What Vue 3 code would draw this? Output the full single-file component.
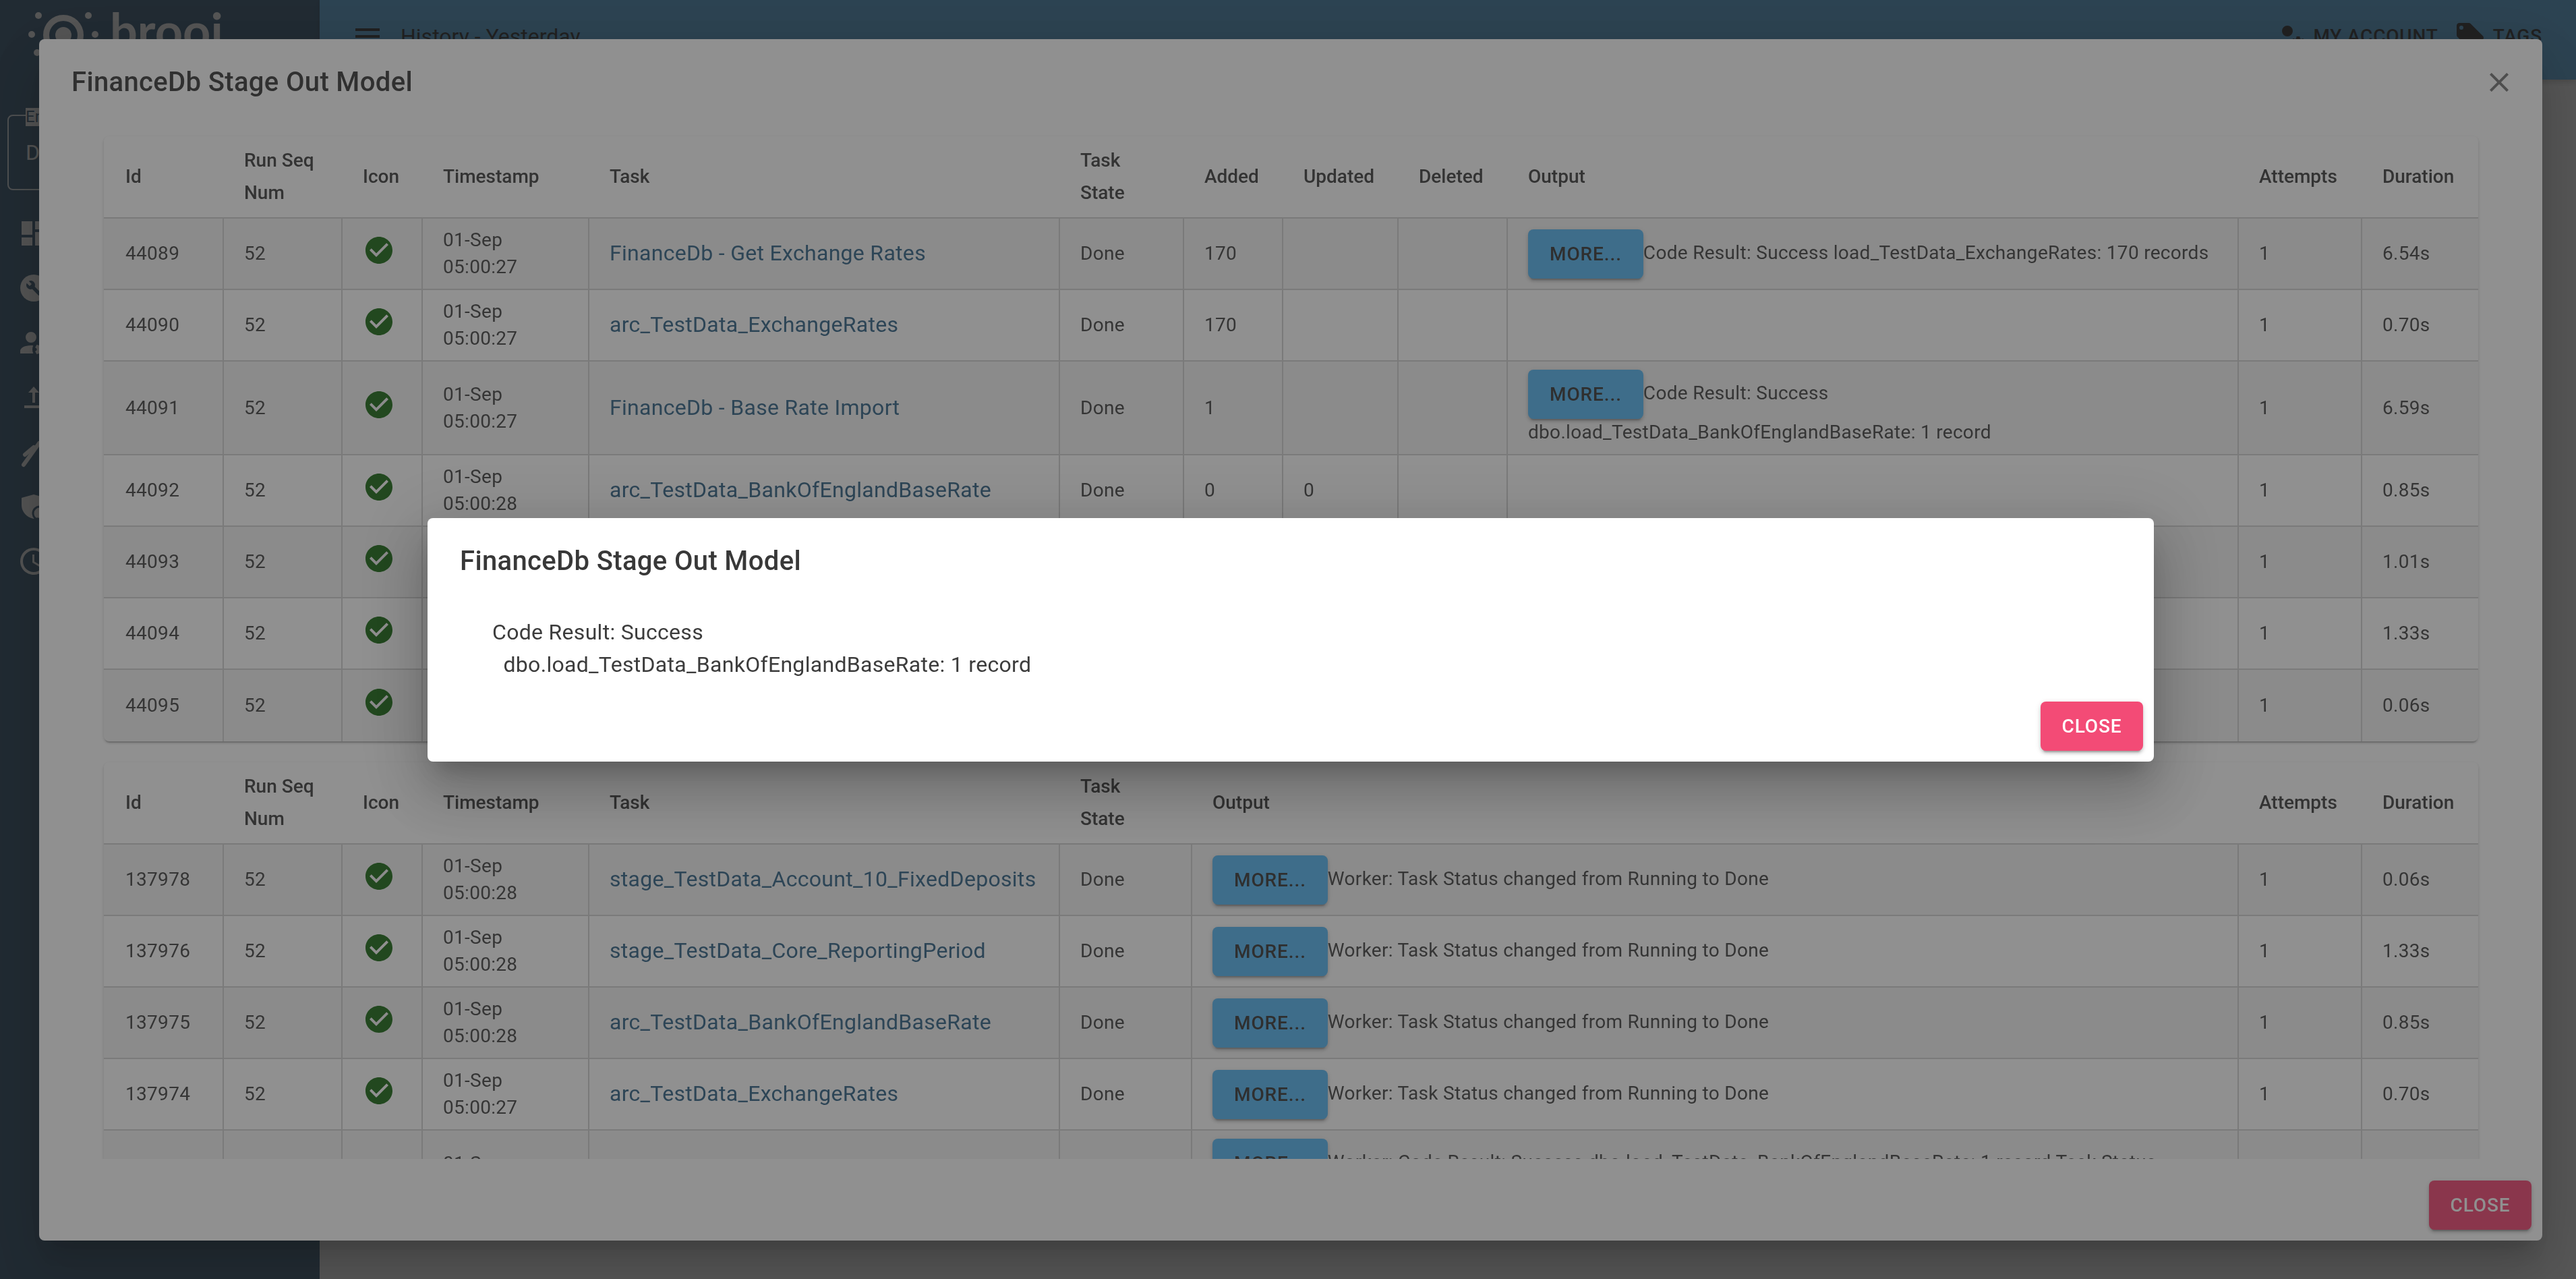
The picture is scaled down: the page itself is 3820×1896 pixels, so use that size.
<template>
  <div class="page">
    <aside class="sidebar">
      <div class="logo">
        <svg class="logo-mark" width="110" height="80" viewBox="40 10 110 80" fill="#f0f0f0">
          <circle cx="57" cy="23" r="5" />
          <circle cx="131" cy="23" r="5" />
          <circle cx="47" cy="51" r="5" />
          <circle cx="141" cy="51" r="5" />
          <circle cx="55" cy="78" r="5" />
          <circle cx="133" cy="78" r="5" />
          <circle cx="94" cy="52" r="12" />
          <circle cx="94" cy="52" r="25.5" fill="none" stroke="#f0f0f0" stroke-width="9" />
        </svg>
        <span class="logo-text">brooi</span>
      </div>
      <div class="env-field">
        <span class="env-label">Env</span>
        <span class="env-value">Dev</span>
      </div>
      <nav class="side-nav">
        <div class="side-item">
          <svg width="48" height="48" viewBox="0 0 24 24" fill="currentColor"><path d="M13,3V9H21V3M13,21H21V11H13M3,21H11V15H3M3,13H11V3H3V13Z" /></svg>
        </div>
        <div class="side-item">
          <svg width="48" height="48" viewBox="0 0 24 24" fill="currentColor">
            <circle cx="12" cy="12" r="10" />
            <path transform="translate(6 6) scale(0.5)" fill="#214969" d="M22.7,19L13.6,9.9C14.5,7.6 14,4.9 12.1,3C10.1,1 7.1,0.6 4.7,1.7L9,6L6,9L1.6,4.7C0.4,7.1 0.9,10.1 2.9,12.1C4.8,14 7.5,14.5 9.8,13.6L18.9,22.7C19.3,23.1 19.9,23.1 20.3,22.7L22.6,20.4C23.1,20 23.1,19.3 22.7,19Z" />
          </svg>
        </div>
        <div class="side-item">
          <svg width="48" height="48" viewBox="0 0 24 24" fill="currentColor"><path d="M10 4A4 4 0 0 0 6 8A4 4 0 0 0 10 12A4 4 0 0 0 14 8A4 4 0 0 0 10 4M17 12C16.87 12 16.76 12.09 16.74 12.21L16.55 13.53C16.25 13.66 15.96 13.82 15.7 14L14.46 13.5C14.35 13.5 14.22 13.5 14.15 13.63L13.15 15.36C13.09 15.47 13.11 15.6 13.21 15.68L14.27 16.5C14.25 16.67 14.24 16.83 14.24 17C14.24 17.17 14.25 17.33 14.27 17.5L13.21 18.32C13.12 18.4 13.09 18.53 13.15 18.64L14.15 20.37C14.21 20.5 14.34 20.5 14.46 20.5L15.7 20C15.96 20.18 16.24 20.35 16.55 20.47L16.74 21.79C16.76 21.91 16.86 22 17 22H19C19.11 22 19.22 21.91 19.24 21.79L19.43 20.47C19.73 20.34 20 20.18 20.27 20L21.5 20.5C21.63 20.5 21.76 20.5 21.83 20.37L22.83 18.64C22.89 18.53 22.86 18.4 22.77 18.32L21.7 17.5C21.72 17.33 21.74 17.17 21.74 17C21.74 16.83 21.73 16.67 21.7 16.5L22.76 15.68C22.85 15.6 22.88 15.47 22.82 15.36L21.82 13.63C21.76 13.5 21.63 13.5 21.5 13.5L20.27 14C20 13.82 19.73 13.65 19.42 13.53L19.23 12.21C19.22 12.09 19.11 12 19 12H17M10 14C5.58 14 2 15.79 2 18V20H11.68A7 7 0 0 1 11 17A7 7 0 0 1 11.64 14.09C11.11 14.03 10.56 14 10 14M18 15.5C18.83 15.5 19.5 16.17 19.5 17C19.5 17.83 18.83 18.5 18 18.5C17.16 18.5 16.5 17.83 16.5 17C16.5 16.17 17.17 15.5 18 15.5Z" /></svg>
        </div>
        <div class="side-item">
          <svg width="48" height="48" viewBox="0 0 24 24" fill="currentColor"><path d="M12 4l-4 4.500h3V16h2V8.500h3zM5 20v-2h14v2z" /></svg>
        </div>
        <div class="side-item">
          <svg width="48" height="48" viewBox="0 0 24 24" fill="none" stroke="currentColor" stroke-linecap="round">
            <path d="M4.500 21.500L16 5.500" stroke-width="3" />
            <path d="M5.500 14L12 8.500" stroke-width="3" />
          </svg>
        </div>
        <div class="side-item">
          <svg width="48" height="48" viewBox="0 0 24 24" fill="currentColor">
            <path d="M12 3L3 5.500V11C3 15.500 6.500 20 12 21C17.500 20 21 15.500 21 11V5.500Z" />
            <circle cx="16.500" cy="17" r="5" fill="none" stroke="#214969" stroke-width="1.500" />
            <circle cx="16.500" cy="17" r="3.500" />
          </svg>
        </div>
        <div class="side-item">
          <svg width="48" height="48" viewBox="0 0 24 24" fill="currentColor"><path d="M12,20A8,8 0 0,0 20,12A8,8 0 0,0 12,4A8,8 0 0,0 4,12A8,8 0 0,0 12,20M12,2A10,10 0 0,1 22,12A10,10 0 0,1 12,22C6.47,22 2,17.5 2,12A10,10 0 0,1 12,2M12.5,7V12.25L17,14.92L16.25,16.15L11,13V7H12.5Z" /></svg>
        </div>
      </nav>
    </aside>

    <div class="main">
      <header class="topbar">
        <svg width="48" height="48" viewBox="0 0 24 24" fill="currentColor"><path d="M3,6H21V8H3V6M3,11H21V13H3V11M3,16H21V18H3V16Z" /></svg>
        <span class="topbar-title">History - Yesterday</span>
        <div class="topbar-actions">
          <svg width="48" height="48" viewBox="0 0 24 24" fill="currentColor"><path d="M10 4A4 4 0 0 0 6 8A4 4 0 0 0 10 12A4 4 0 0 0 14 8A4 4 0 0 0 10 4M17 12C16.87 12 16.76 12.09 16.74 12.21L16.55 13.53C16.25 13.66 15.96 13.82 15.7 14L14.46 13.5C14.35 13.5 14.22 13.5 14.15 13.63L13.15 15.36C13.09 15.47 13.11 15.6 13.21 15.68L14.27 16.5C14.25 16.67 14.24 16.83 14.24 17C14.24 17.17 14.25 17.33 14.27 17.5L13.21 18.32C13.12 18.4 13.09 18.53 13.15 18.64L14.15 20.37C14.21 20.5 14.34 20.5 14.46 20.5L15.7 20C15.96 20.18 16.24 20.35 16.55 20.47L16.74 21.79C16.76 21.91 16.86 22 17 22H19C19.11 22 19.22 21.91 19.24 21.79L19.43 20.47C19.73 20.34 20 20.18 20.27 20L21.5 20.5C21.63 20.5 21.76 20.5 21.83 20.37L22.83 18.64C22.89 18.53 22.86 18.4 22.77 18.32L21.7 17.5C21.72 17.33 21.74 17.17 21.74 17C21.74 16.83 21.73 16.67 21.7 16.5L22.76 15.68C22.85 15.6 22.88 15.47 22.82 15.36L21.82 13.63C21.76 13.5 21.63 13.5 21.5 13.5L20.27 14C20 13.82 19.73 13.65 19.42 13.53L19.23 12.21C19.22 12.09 19.11 12 19 12H17M10 14C5.58 14 2 15.79 2 18V20H11.68A7 7 0 0 1 11 17A7 7 0 0 1 11.64 14.09C11.11 14.03 10.56 14 10 14M18 15.5C18.83 15.5 19.5 16.17 19.5 17C19.5 17.83 18.83 18.5 18 18.5C17.16 18.5 16.5 17.83 16.5 17C16.5 16.17 17.17 15.5 18 15.5Z" /></svg>
          <span class="topbar-link account">MY ACCOUNT</span>
          <svg width="48" height="48" viewBox="0 0 24 24" fill="currentColor"><path d="M5.5,7A1.5,1.5 0 0,1 4,5.5A1.5,1.5 0 0,1 5.5,4A1.5,1.5 0 0,1 7,5.5A1.5,1.5 0 0,1 5.5,7M21.41,11.58L12.41,2.58C12.05,2.22 11.55,2 11,2H4C2.89,2 2,2.89 2,4V11C2,11.55 2.22,12.05 2.59,12.41L11.58,21.41C11.95,21.77 12.45,22 13,22C13.55,22 14.05,21.77 14.41,21.41L21.41,14.41C21.78,14.05 22,13.55 22,13C22,12.44 21.77,11.94 21.41,11.58Z" /></svg>
          <span class="topbar-link">TAGS</span>
        </div>
      </header>
    </div>

    <!-- history dialog -->
    <div class="backdrop backdrop-history">
      <div class="history-modal">
        <div class="history-head">
          <h2>FinanceDb Stage Out Model</h2>
          <svg class="close-x" width="48" height="48" viewBox="0 0 24 24" fill="currentColor"><path d="M19,6.41L17.59,5L12,10.59L6.41,5L5,6.41L10.59,12L5,17.59L6.41,19L12,13.41L17.59,19L19,17.59L13.41,12L19,6.41Z" /></svg>
        </div>
        <div class="history-body">
          <div v-for="table in tables" :key="table.id" class="log-card">
            <table class="log-table">
              <colgroup>
                <col v-for="col in table.cols" :key="col.key" :style="{ width: col.width + 'px' }">
              </colgroup>
              <thead>
                <tr>
                  <th v-for="col in table.cols" :key="col.key" :class="{ stacked: col.key === 'state' }">{{ col.label }}</th>
                </tr>
              </thead>
              <tbody>
                <tr v-for="row in table.rows" :key="row.id">
                  <td v-for="col in table.cols" :key="col.key">
                    <svg v-if="col.key === 'icon'" class="ok-icon" width="48" height="48" viewBox="0 0 24 24" fill="currentColor"><path d="M12 2C17.5 2 22 6.5 22 12S17.500 22 12 22 2 17.500 2 12 6.500 2 12 2M10 17L19 8L17.600 6.600L10 14.200L6.400 10.600L5 12L10 17Z" fill-rule="evenodd" /></svg>
                    <a v-else-if="col.key === 'task'" class="task-link">{{ row.task }}</a>
                    <template v-else-if="col.key === 'output'">
                      <button v-if="row.output" class="more-btn">MORE...</button><span>{{ row.output }}</span>
                      <template v-if="row.output2"><br>{{ row.output2 }}</template>
                    </template>
                    <template v-else>{{ row[col.key] }}</template>
                  </td>
                </tr>
              </tbody>
            </table>
          </div>
        </div>
        <div class="history-foot">
          <button class="close-btn">CLOSE</button>
        </div>
      </div>
    </div>

    <!-- output detail dialog -->
    <div class="backdrop backdrop-detail">
      <div class="detail-modal">
        <h2>FinanceDb Stage Out Model</h2>
        <div class="detail-text">{{ detailText }}</div>
        <div class="detail-foot">
          <button class="close-btn">CLOSE</button>
        </div>
      </div>
    </div>
  </div>
</template>

<script setup>
const base = [
  { key: 'id', label: 'Id', width: 176 },
  { key: 'seq', label: 'Run Seq Num', width: 176 },
  { key: 'icon', label: 'Icon', width: 119 },
  { key: 'time', label: 'Timestamp', width: 247 },
  { key: 'task', label: 'Task', width: 698 }
]
const tail = [
  { key: 'attempts', label: 'Attempts', width: 183 },
  { key: 'duration', label: 'Duration', width: 174 }
]
const worker = 'Worker: Task Status changed from Running to Done'
const detailText = 'Code Result: Success\n  dbo.load_TestData_BankOfEnglandBaseRate: 1 record'

const tables = [
  {
    id: 'tasks',
    cols: [
      ...base,
      { key: 'state', label: 'Task State', width: 184 },
      { key: 'added', label: 'Added', width: 147 },
      { key: 'updated', label: 'Updated', width: 171 },
      { key: 'deleted', label: 'Deleted', width: 162 },
      { key: 'output', label: 'Output', width: 1084 },
      ...tail
    ],
    rows: [
      { id: 44089, seq: 52, time: '01-Sep 05:00:27', task: 'FinanceDb - Get Exchange Rates', state: 'Done', added: 170, output: 'Code Result: Success load_TestData_ExchangeRates: 170 records', attempts: 1, duration: '6.54s' },
      { id: 44090, seq: 52, time: '01-Sep 05:00:27', task: 'arc_TestData_ExchangeRates', state: 'Done', added: 170, attempts: 1, duration: '0.70s' },
      { id: 44091, seq: 52, time: '01-Sep 05:00:27', task: 'FinanceDb - Base Rate Import', state: 'Done', added: 1, output: 'Code Result: Success', output2: 'dbo.load_TestData_BankOfEnglandBaseRate: 1 record', attempts: 1, duration: '6.59s' },
      { id: 44092, seq: 52, time: '01-Sep 05:00:28', task: 'arc_TestData_BankOfEnglandBaseRate', state: 'Done', added: 0, updated: 0, attempts: 1, duration: '0.85s' },
      { id: 44093, seq: 52, time: '01-Sep 05:00:28', task: 'FinanceDb - Stage Out', state: 'Done', attempts: 1, duration: '1.01s' },
      { id: 44094, seq: 52, time: '01-Sep 05:00:28', task: 'stage_TestData_Core_ReportingPeriod', state: 'Done', attempts: 1, duration: '1.33s' },
      { id: 44095, seq: 52, time: '01-Sep 05:00:28', task: 'stage_TestData_Account_10_FixedDeposits', state: 'Done', attempts: 1, duration: '0.06s' }
    ]
  },
  {
    id: 'messages',
    cols: [
      ...base,
      { key: 'state', label: 'Task State', width: 196 },
      { key: 'output', label: 'Output', width: 1552 },
      ...tail
    ],
    rows: [
      { id: 137978, seq: 52, time: '01-Sep 05:00:28', task: 'stage_TestData_Account_10_FixedDeposits', state: 'Done', output: worker, attempts: 1, duration: '0.06s' },
      { id: 137976, seq: 52, time: '01-Sep 05:00:28', task: 'stage_TestData_Core_ReportingPeriod', state: 'Done', output: worker, attempts: 1, duration: '1.33s' },
      { id: 137975, seq: 52, time: '01-Sep 05:00:28', task: 'arc_TestData_BankOfEnglandBaseRate', state: 'Done', output: worker, attempts: 1, duration: '0.85s' },
      { id: 137974, seq: 52, time: '01-Sep 05:00:27', task: 'arc_TestData_ExchangeRates', state: 'Done', output: worker, attempts: 1, duration: '0.70s' },
      { id: 137973, seq: 52, time: '01-Sep 05:00:27', task: 'FinanceDb - Base Rate Import', state: 'Done', output: 'Worker: Code Result: Success dbo.load_TestData_BankOfEnglandBaseRate: 1 record Task Status changed from Running to Done', attempts: 1, duration: '6.59s' }
    ]
  }
]
</script>

<style>
html, body {
  margin: 0;
  height: 100%;
  overflow: hidden;
}
</style>

<style scoped>
.page {
  display: flex;
  height: 100vh;
  background: #fafafa;
  font-family: Roboto, "Liberation Sans", sans-serif;
  overflow: hidden;
}

.sidebar {
  width: 474px;
  flex: none;
  background: #214969;
  color: #f0f0f0;
}

.logo {
  display: flex;
  height: 158px;
  padding: 10px 0 0 40px;
  box-sizing: border-box;
  gap: 13px;
}

.logo-mark {
  flex: none;
}

.logo-text {
  font-family: Lato, sans-serif;
  font-size: 72px;
  font-weight: 700;
  line-height: 80px;
  margin-top: -6px;
}

.env-field {
  position: relative;
  height: 112px;
  margin: 12px 11px 23px;
  border: 2px solid #d8e0e4;
  border-radius: 8px;
  box-sizing: border-box;
  display: flex;
  align-items: center;
  padding-left: 25px;
  font-size: 32px;
}

.env-label {
  position: absolute;
  top: -12px;
  left: 25px;
  padding: 0 4px 0 0;
  background: #f0f0f0;
  color: #214969;
  font-size: 24px;
  line-height: 27px;
}

.side-item {
  height: 81px;
  display: flex;
  align-items: center;
  padding-left: 26px;
}

.main {
  flex: 1;
}

.topbar {
  height: 118px;
  box-sizing: border-box;
  display: flex;
  align-items: flex-start;
  padding: 30px 50px 0 47px;
  background: #4faae6;
  color: #212121;
  box-shadow: 0 4px 8px rgba(0, 0, 0, 0.2);
}

.topbar-title {
  margin-left: 25px;
  font-size: 32px;
  line-height: 48px;
}

.topbar-actions {
  margin-left: auto;
  display: flex;
  gap: 10px;
}

.topbar-link {
  font-size: 28px;
  font-weight: 500;
  letter-spacing: 0.8px;
  line-height: 48px;
}

.account {
  margin-right: 13px;
}

.backdrop {
  position: fixed;
  inset: 0;
  background: rgba(33, 33, 33, 0.5);
  display: flex;
}

.backdrop-history {
  padding: 58px 50px 57px 58px;
}

.backdrop-detail {
  padding-left: 8px;
  justify-content: center;
  align-items: center;
}

.history-modal {
  flex: 1;
  display: flex;
  flex-direction: column;
  min-width: 0;
  background: #fff;
  border-radius: 8px;
  box-shadow: 0 22px 30px -14px rgba(0, 0, 0, 0.2), 0 48px 76px 6px rgba(0, 0, 0, 0.14), 0 18px 92px 16px rgba(0, 0, 0, 0.12);
}

.history-head {
  display: flex;
  justify-content: space-between;
  align-items: center;
  height: 128px;
  box-sizing: border-box;
  padding: 32px 40px 32px 48px;
  flex: none;
}

h2 {
  margin: 0;
  font-size: 40px;
  font-weight: 500;
  line-height: 64px;
  letter-spacing: 0.35px;
}

.history-head h2 {
  color: #3f3f3f;
}

.close-x {
  color: #7a7a7a;
}

.history-body {
  flex: 1;
  min-height: 0;
  overflow: hidden;
  padding: 16px 95px 0 96px;
}

.log-card {
  background: #fff;
  border-radius: 8px;
  overflow: hidden;
  margin-bottom: 31px;
  box-shadow: 0 4px 2px -2px rgba(0, 0, 0, 0.2), 0 2px 4px 0 rgba(0, 0, 0, 0.1), 0 2px 6px 0 rgba(0, 0, 0, 0.08);
}

.log-table {
  width: 100%;
  table-layout: fixed;
  border-collapse: separate;
  border-spacing: 0;
  font-size: 28px;
  line-height: 40px;
  color: #484848;
}

.log-table th {
  height: 122px;
  box-sizing: border-box;
  padding: 12px 32px;
  border-bottom: 2px solid #d2d2d2;
  text-align: left;
  font-weight: 500;
  line-height: 48px;
  color: #454545;
}

.log-table th.stacked {
  padding-right: 60px;
}

.log-table td {
  height: 106px;
  box-sizing: border-box;
  padding: 12px 32px 12px 30px;
  border-left: 2px solid #d2d2d2;
  border-bottom: 2px solid #d2d2d2;
  vertical-align: middle;
  letter-spacing: 0.3px;
}

.log-table td:first-child {
  padding-left: 32px;
  border-left: none;
}

.log-table tbody tr:last-child td {
  border-bottom: none;
}

.log-table tbody tr:nth-child(odd) td {
  background: rgba(0, 0, 0, 0.04);
}

.ok-icon {
  display: block;
  margin-bottom: 10px;
  color: #226f1c;
}

.task-link {
  font-size: 32px;
  color: #38688a;
}

.more-btn,
.close-btn {
  height: 73px;
  padding: 0 32px;
  border: none;
  border-radius: 8px;
  font-family: inherit;
  font-size: 28px;
  font-weight: 500;
  letter-spacing: 0.9px;
  box-shadow: 0 6px 2px -4px rgba(0, 0, 0, 0.2), 0 4px 4px 0 rgba(0, 0, 0, 0.14), 0 2px 10px 0 rgba(0, 0, 0, 0.12);
}

.more-btn {
  vertical-align: middle;
  background: #5bb8f2;
  color: #3c3c3c;
}

.close-btn {
  width: 152px;
  padding: 0;
  background: #f34b76;
  color: #fff;
}

.history-foot {
  flex: none;
  display: flex;
  justify-content: flex-end;
  padding: 32px 16px 16px;
}

.detail-modal {
  width: 2560px;
  height: 361px;
  box-sizing: border-box;
  padding-top: 32px;
  background: #fff;
  border-radius: 8px;
  box-shadow: 0 22px 30px -14px rgba(0, 0, 0, 0.2), 0 48px 76px 6px rgba(0, 0, 0, 0.14), 0 18px 92px 16px rgba(0, 0, 0, 0.12);
}

.detail-modal h2 {
  padding-left: 48px;
  color: #383838;
}

.detail-text {
  padding: 49px 48px 15px 96px;
  font-size: 32px;
  line-height: 48px;
  letter-spacing: 0.3px;
  color: #3c3c3c;
  white-space: pre-wrap;
}

.detail-foot {
  display: flex;
  justify-content: flex-end;
  padding: 16px;
}
</style>
